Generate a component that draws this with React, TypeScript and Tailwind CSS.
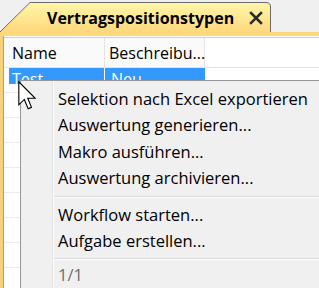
const menuItems = [
  "Selektion nach Excel exportieren",
  "Auswertung generieren...",
  "Makro ausführen...",
  "Auswertung archivieren...",
];

const moreItems = ["Workflow starten...", "Aufgabe erstellen..."];

function Tab() {
  return (
    <div className="relative w-[271px] h-[31px]">
      <svg className="absolute inset-0" width="271" height="31" viewBox="0 0 271 31">
        <defs>
          <linearGradient id="tabfill" x1="0" y1="0" x2="0" y2="1">
            <stop offset="0" stopColor="#fff7a8" />
            <stop offset="1" stopColor="#ffd87c" />
          </linearGradient>
        </defs>
        <path
          d="M0 31 L30 1.5 H266 Q270.5 1.5 270.5 6 V31"
          fill="url(#tabfill)"
          stroke="#6b6b6b"
          strokeWidth="1"
        />
      </svg>
      <div className="relative flex items-center h-full pl-[47px] pt-[2px]">
        <span className="text-[16px] font-bold text-black leading-none">Vertragspositionstypen</span>
        <svg className="ml-[15px]" width="14" height="14" viewBox="0 0 14 14">
          <path d="M2 2 L12 12 M12 2 L2 12" stroke="#2a2a2a" strokeWidth="2.5" strokeLinecap="square" />
        </svg>
      </div>
    </div>
  );
}

function Cursor() {
  return (
    <svg className="absolute left-[18px] top-[81px]" width="18" height="29" viewBox="0 0 12 19.5">
      <path
        d="M0.5 0.5 V16 L4.2 12.4 L6.8 18.6 L9 17.7 L6.5 11.6 H11.5 Z"
        fill="#fff"
        stroke="#000"
        strokeWidth="0.75"
        strokeLinejoin="miter"
      />
    </svg>
  );
}

export default function App() {
  return (
    <div className="relative w-[319px] h-[288px] overflow-hidden bg-[#f0f0f0] font-['Open_Sans',sans-serif]">
      <div className="h-[32px] flex items-end">
        <Tab />
      </div>
      <div className="h-[4px] bg-[#ffd87c]" />
      <div className="flex h-[252px]">
        <div className="w-[3px] bg-[#f7d27a]" />
        <div className="flex-1 bg-white pt-px border-l border-[#a0a0a0]">
          <div className="border-t border-[#cfcfcf]">
            {/* header */}
            <div className="flex h-[30px] bg-[#fafafa] border-b border-[#e3e3e3] text-[16px] text-black">
              <div className="w-[101px] flex items-center pl-[8px] border-r border-[#e3e3e3]">Name</div>
              <div className="w-[100px] flex items-center pl-[4px] border-r border-[#e3e3e3]">Beschreibu...</div>
              <div className="flex-1 bg-white" />
            </div>
            {/* selected row */}
            <div className="flex h-[25px] text-[16px] text-white leading-[22px] border-b border-[#ececec]">
              <div className="w-[5px]" />
              <div className="w-[96px] h-[16px] bg-[#3399ff] pl-[3px] border-r border-white">Test</div>
              <div className="w-[100px] h-[16px] bg-[#3399ff] pl-[6px]">Neu</div>
            </div>
            <div className="h-[25px] border-b border-[#ececec]" />
            {[0, 1, 2, 3, 4, 5, 6].map((i) => (
              <div key={i} className="h-[25px] border-b border-[#ececec]" />
            ))}
          </div>
        </div>
      </div>

      {/* context menu */}
      <div className="absolute left-[20px] top-[80px] w-[320px] h-[220px] border border-[#979797] bg-[#f0f0f0] flex">
        <div className="w-[31px]" />
        <div className="w-px bg-[#e2e3e3]" />
        <div className="w-px bg-white" />
        <div className="flex-1 pt-[5px] text-[16.5px] text-black">
          {menuItems.map((t) => (
            <div key={t} className="h-[26.5px] flex items-center pl-[4px]">{t}</div>
          ))}
          <div className="h-[10px] flex flex-col justify-center">
            <div className="h-px bg-[#dadada]" />
            <div className="h-px bg-white" />
          </div>
          {moreItems.map((t) => (
            <div key={t} className="h-[26.5px] flex items-center pl-[4px]">{t}</div>
          ))}
          <div className="h-[7px] flex flex-col justify-center">
            <div className="h-px bg-[#dadada]" />
            <div className="h-px bg-white" />
          </div>
          <div className="h-[26.5px] flex items-center pl-[4px] text-[#6d6d6d]">1/1</div>
        </div>
      </div>

      <Cursor />
    </div>
  );
}
